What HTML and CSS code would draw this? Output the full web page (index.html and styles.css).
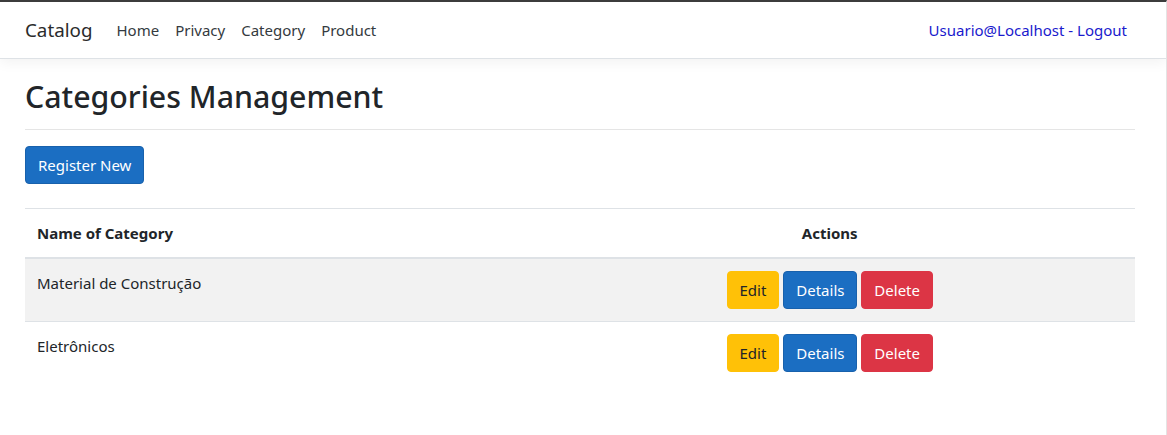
FILE: index.html
```html
<!DOCTYPE html>
<html lang="pt">
<head>
<meta charset="utf-8">
<title>Categories Management - Catalog</title>
<link rel="stylesheet" href="styles.css">
</head>
<body>
<div class="page">
  <header class="navbar">
    <div class="nav-container">
      <a class="brand" href="#">Catalog</a>
      <ul class="nav-links">
        <li><a class="nav-link" href="#">Home</a></li>
        <li><a class="nav-link" href="#">Privacy</a></li>
        <li><a class="nav-link" href="#">Category</a></li>
        <li><a class="nav-link" href="#">Product</a></li>
      </ul>
      <div class="nav-user">
        <a class="nav-link user-link" href="#">Usuario@Localhost - Logout</a>
      </div>
    </div>
  </header>
  <main class="container">
    <h1 class="title">Categories Management</h1>
    <hr class="divider">
    <p class="actions-top"><a class="btn btn-primary" href="#">Register New</a></p>
    <table class="table">
      <thead>
        <tr>
          <th class="col-name">Name of Category</th>
          <th class="col-actions">Actions</th>
        </tr>
      </thead>
      <tbody>
        <tr class="striped">
          <td>Material de Construção</td>
          <td class="col-actions">
            <a class="btn btn-warning" href="#">Edit</a>
            <a class="btn btn-primary" href="#">Details</a>
            <a class="btn btn-danger" href="#">Delete</a>
          </td>
        </tr>
        <tr>
          <td>Eletrônicos</td>
          <td class="col-actions">
            <a class="btn btn-warning" href="#">Edit</a>
            <a class="btn btn-primary" href="#">Details</a>
            <a class="btn btn-danger" href="#">Delete</a>
          </td>
        </tr>
      </tbody>
    </table>
  </main>
</div>
</body>
</html>
```

FILE: styles.css
```css
* { box-sizing: border-box; }

html, body {
  margin: 0;
  padding: 0;
  background: #fff;
}

body {
  font-family: "Noto Sans", "Open Sans", "DejaVu Sans", sans-serif;
  font-size: 15px;
  line-height: 24px;
  color: #212529;
}

.page {
  height: 435px;
  border-top: 2px solid #3c3c3c;
  border-right: 1px solid #e4e4e4;
  overflow: hidden;
}

a { text-decoration: none; }

.navbar {
  background: #fff;
  border-bottom: 1px solid #dee2e6;
  box-shadow: 0 4px 12px rgba(0, 0, 0, 0.05);
  padding: 8px 0;
  margin-bottom: 16px;
}

.nav-container {
  width: 1110px;
  margin-left: 25px;
  display: flex;
  align-items: center;
}

.brand {
  font-size: 18.8px;
  line-height: 30px;
  padding: 5px 0;
  margin-right: 16px;
  color: #2b2b2b;
}

.nav-links {
  display: flex;
  list-style: none;
  margin: 0;
  padding: 0;
}

.nav-link {
  display: block;
  padding: 8px;
  color: #343a40;
}

.nav-user {
  margin-left: auto;
}

.user-link {
  color: #1a1acd;
}

.container {
  width: 1110px;
  margin-left: 25px;
}

.title {
  font-size: 30.3px;
  font-weight: 500;
  line-height: 38px;
  margin: 0;
  padding-top: 3px;
  color: #212529;
}

.divider {
  border: 0;
  border-top: 1px solid rgba(0, 0, 0, 0.1);
  margin: 13px 0 16px;
  height: 0;
}

.actions-top {
  margin: 0 0 24px;
}

.btn {
  display: inline-block;
  padding: 6px 12px;
  border: 1px solid transparent;
  border-radius: 4px;
  line-height: 24px;
  font-size: 15px;
  text-align: center;
  vertical-align: middle;
}

.btn-primary {
  color: #fff;
  background: #1b6ec2;
  border-color: #1861ac;
}

.btn-warning {
  color: #212529;
  background: #ffc107;
  border-color: #ffc107;
}

.btn-danger {
  color: #fff;
  background: #dc3545;
  border-color: #dc3545;
}

.table {
  width: 100%;
  border-collapse: collapse;
}

.table th,
.table td {
  padding: 12px;
  border-top: 1px solid #dee2e6;
  vertical-align: top;
  text-align: left;
}

.table thead th {
  border-bottom: 2px solid #dee2e6;
  vertical-align: bottom;
  font-weight: 700;
}

.col-name { width: 45%; }

.table .col-actions { text-align: center; }

.striped td { background: rgba(0, 0, 0, 0.05); }
```
